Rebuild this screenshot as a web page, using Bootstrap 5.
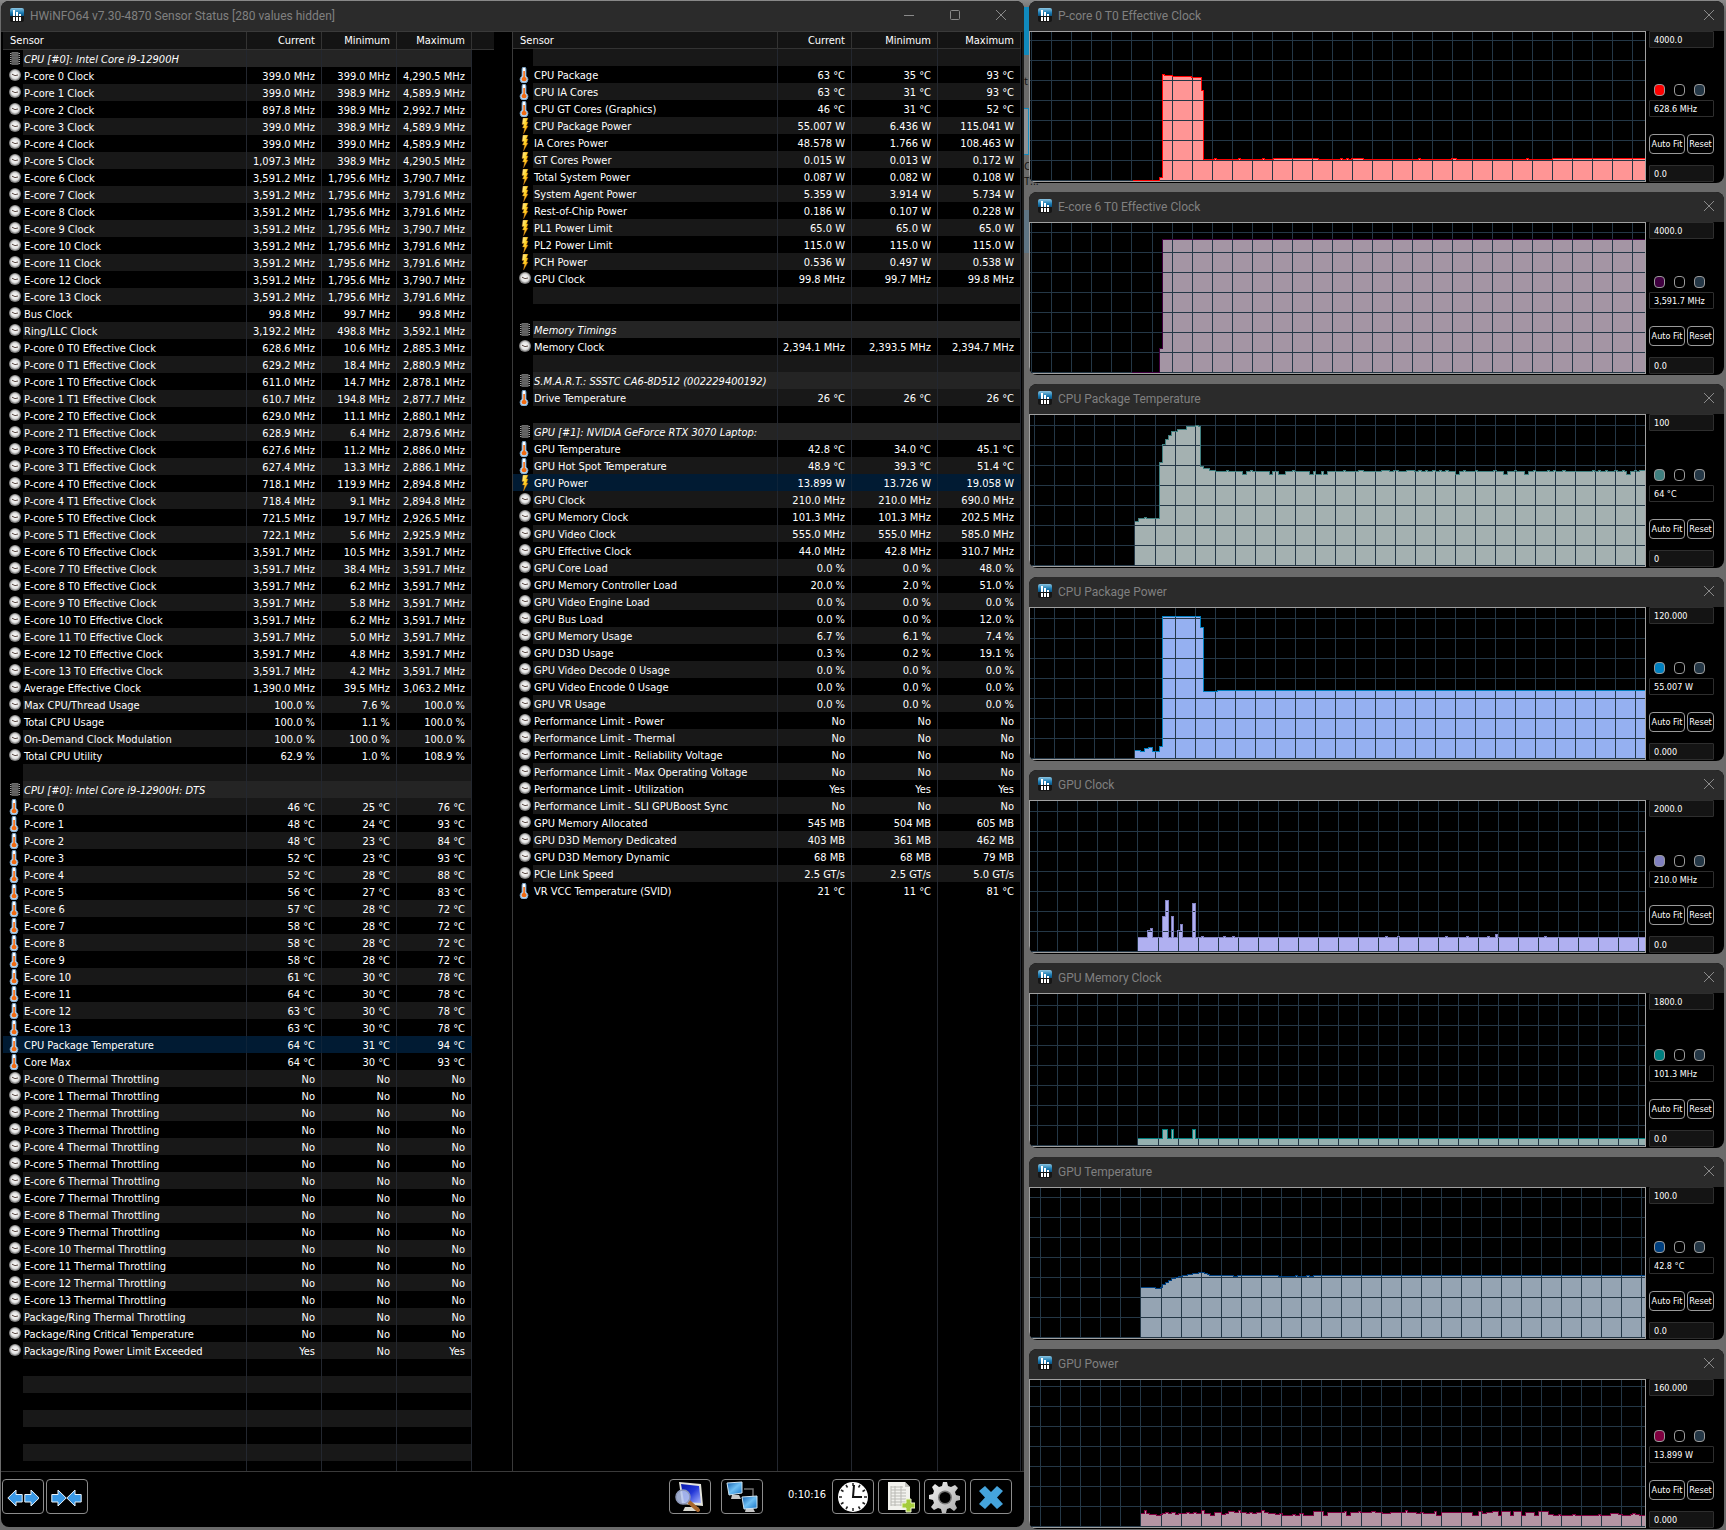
<!DOCTYPE html>
<html lang="en">
<head>
<meta charset="utf-8">
<meta name="viewport" content="width=device-width, initial-scale=1">
<title>HWiNFO64 Sensor Status</title>
<link rel="stylesheet" href="https://cdn.jsdelivr.net/npm/bootstrap@5.3.0/dist/css/bootstrap.min.css">
<style>
:root{--ui:"DejaVu Sans Condensed","DejaVu Sans",sans-serif;--line:#333;--grid:#243746}
body{background:linear-gradient(#8a8a8a 0,#6b6b6b 12px);font-family:var(--ui);font-size:11px;line-height:14px;color:#fff;min-height:100vh}
.desk{padding:1px 2px 1px 1px;gap:5px}
.main-win{flex:1023 1 0;min-width:0}
.side{flex:695 1 0;min-width:0;gap:9px}
.win{background:#000;border-radius:8px;overflow:hidden;position:relative;z-index:1}
.titlebar{height:30px;background:#2b2b2b;color:#808080;font:12px/26px Roboto,"Noto Sans",sans-serif;padding:0 9px 2px 9px;gap:6px}
.titlebar h1,.titlebar h2{font:inherit;margin:0;padding-top:2px}
.main-win .titlebar{padding-right:17px}
.app-ico{width:14px;height:14px;flex:none}
.capbtn{background:none;border:0;padding:0;width:12px;height:26px;color:#8a8a8a;display:flex;align-items:center;justify-content:center}
.caps{gap:34px}
.lists{display:grid;grid-template-columns:511fr 512fr}
.pane{min-width:0;border-top:1px solid #3a3a3a}
.pane-a{padding:0 18px 0 2px}
.pane-b{border-left:1px solid #3a3a3a;padding-right:1px;border-right:2px solid #1c1c1c}
.sens{table-layout:fixed;width:100%;height:100%;border-collapse:separate;border-spacing:0}
.sens th{background:#141414;font-weight:400;height:18px;border-bottom:1px solid var(--line);border-right:1px solid var(--line);padding:0 6px 0 0;text-align:right;line-height:15px}
.pane-b th{height:17px}
.sens th:first-child{text-align:left;padding-left:7px}
.pane-a th:last-child{border-right:0}
.sens td{height:17px;padding:3px 6px 0 0;border-right:1px solid #23272f;text-align:right;white-space:nowrap;overflow:hidden}
.sens td.ico{border-right:0;padding:0 0 0 4px;text-align:left}
.sens td.nm{text-align:left;padding:3px 0 0 1px}
.sens td.rest{border-right:0}
.sens tr.alt td:not(.ico):not(.rest){background:#181818}
.sens tr.grp td:not(.ico):not(.rest){background:#242424}
.sens tr.grp .nm{font-style:italic}
.sens tr.pick td:not(.rest){background:#011b33;border-right-color:#0d2339}
.sens tr.fill td{height:10px;padding:0}
.pane-b tr.fill{height:100%}
.sens svg{display:block;width:16px;height:16px}
.c-ico{width:20px}.c75{width:75px}.c74{width:74px}.c86{width:86px}.c83{width:83px}.c22{width:22px}
.tools{height:56px;border-top:1px solid #3a3a3a;padding:7px 12px 0 1px;gap:4px}
.pair{gap:2px}
.tool{width:42px;height:35px;padding:0;background:#000;border:1px solid #8c8c8c;border-radius:4px;display:flex;align-items:center;justify-content:center}
.tool svg{width:32px;height:32px}
.gap-l{margin-right:6px}
.clock-txt{margin:0 2px 0 21px;line-height:32px;width:38px}
.plot{flex:1 1 0;min-width:0;border:1px solid #a0a0a0;margin-bottom:1px}
.plot svg{display:block;width:100%}
.ctl{width:78px;padding:0 10px 1px 3px;font-size:9px}
.ctl input{width:65px;height:17px;padding:0 0 0 4px;color:#fff;background:#141414;border:1px solid #2e2e2e;border-radius:1px;font-size:9px;line-height:15px;display:block}
.ctl input.now{background:#000}
.sw{width:11px;height:12px;padding:0;border:1px solid #9a9a9a;border-radius:4px}
.sws{gap:9px;padding-left:5px;margin-bottom:4px}
.bts{gap:2px;margin:17px 0 11px 0}
.bt{height:20px;padding:0;color:#fff;background:#000;border:1px solid #9a9a9a;border-radius:4px;font-size:9px;line-height:16px;white-space:nowrap;overflow:hidden}
.bt-a{width:36px}.bt-r{width:27px}
.behind{position:absolute;left:1024px;top:0;width:20px;color:#101010;font:11px/14px "Open Sans",sans-serif}
.behind i{position:absolute;left:0;width:5px}
.b1{top:7px;height:48px;background:#1089bd}
.b2{top:108px;height:47px;border:1px solid #1089bd;border-left:0;background:#8d9296}
.b3{top:210px;height:43px;background:#5e7484}
.behind span{position:absolute;left:0}
.s1{top:74px}.s2{top:159px}.s3{top:174px}
</style>
</head>
<body>
<svg class="position-absolute" width="0" height="0" aria-hidden="true">
<defs>
<linearGradient id="gApp" x1="0" y1="0" x2="0" y2="1"><stop offset="0" stop-color="#8cc4e0"/><stop offset=".6" stop-color="#1a7cb4"/><stop offset="1" stop-color="#0a4f7d"/></linearGradient>
<linearGradient id="gBolt" x1="0" y1="0" x2="1" y2="1"><stop offset="0" stop-color="#fff6b0"/><stop offset=".5" stop-color="#ffd21f"/><stop offset="1" stop-color="#f07a10"/></linearGradient>
<linearGradient id="gScr" x1="0" y1="0" x2="1" y2="1"><stop offset="0" stop-color="#0718a8"/><stop offset=".5" stop-color="#2438d8"/><stop offset="1" stop-color="#a9b6ff"/></linearGradient>
<linearGradient id="gNet" x1="0" y1="0" x2="1" y2="1"><stop offset="0" stop-color="#0d5aa8"/><stop offset=".5" stop-color="#6fc0f5"/><stop offset="1" stop-color="#1673c6"/></linearGradient>
<linearGradient id="gGear" x1="0" y1="0" x2="1" y2="1"><stop offset="0" stop-color="#f4f4f4"/><stop offset="1" stop-color="#a8a8a8"/></linearGradient>
<radialGradient id="gDial"><stop offset="0" stop-color="#fff"/><stop offset=".7" stop-color="#e2e2e2"/><stop offset="1" stop-color="#9c9c9c"/></radialGradient>
<symbol id="app" viewBox="0 0 14 14"><rect width="14" height="14" rx="2" fill="#151515"/><path d="M0 8V2Q0 0 2 0H12Q14 0 14 2V8Z" fill="url(#gApp)"/><path d="M3 2h2v6H3zM6 4h2v4H6zM9 6h2v2H9z" fill="#fff"/><path d="M3 9h2v4H3zM6 9h2v4H6zM9 9h2v4H9z" fill="#fff"/></symbol>
<symbol id="k" viewBox="0 0 16 16"><circle cx="8" cy="7" r="6" fill="#7d7d7d"/><circle cx="8" cy="6.8" r="5.2" fill="url(#gDial)"/><path d="M5 6.2 8 7.6 11 7" fill="none" stroke="#5b4a44" stroke-width="1"/></symbol>
<symbol id="g" viewBox="0 0 16 16"><rect x="4.500" y="1" width="7" height="13" fill="#5c5c5c"/><path d="M5 1.500h6M5 4h6M5 7h6M5 10h6" stroke="#6c6c6c"/><path d="M3 2.500h1.500M3 4.500h1.500M3 6.500h1.500M3 8.500h1.500M3 10.500h1.500M3 12.500h1.500M11.500 2.500H13M11.500 4.500H13M11.500 6.500H13M11.500 8.500H13M11.500 10.500H13M11.500 12.500H13" stroke="#a0a0a0"/></symbol>
<symbol id="t" viewBox="0 0 16 16"><path d="M5 2q0-2 2-2t2 2v7.200q2 1 2 3.200 0 3.600-4 3.600t-4-3.600q0-2.200 2-3.200z" fill="#b9d6ee" stroke="#6f9cc4" stroke-width=".8"/><path d="M6 1h2v8H6z" fill="#fff"/><path d="M6.300 4h1.600v6q1.700.6 1.700 2.200 0 2-2.500 2t-2.500-2q0-1.600 1.700-2.200z" fill="#f26a10"/></symbol>
<symbol id="b" viewBox="0 0 16 16"><path d="M6 0h5L9.500 4H11L9.500 8H11L6.500 16 7.500 10H5.500L7 6.500H5Z" fill="url(#gBolt)" stroke="#b06010" stroke-width=".4"/></symbol>
<symbol id="arw" viewBox="0 0 16 18"><path d="M.8 9 9 1v4.500h6.200v7.500H9V17z" fill="#3a99e6" stroke="#e9f3fb" stroke-width="1"/></symbol>
</defs></svg>

<div class="behind" aria-hidden="true"><i class="b1"></i><i class="b2"></i><i class="b3"></i><span class="s1">t</span><span class="s2">C</span><span class="s3">T...</span></div>

<div class="desk d-flex align-items-start">
<main class="main-win win">
  <header class="titlebar d-flex align-items-center">
    <svg class="app-ico"><use href="#app"/></svg>
    <h1 class="flex-grow-1 text-nowrap">HWiNFO64 v7.30-4870 Sensor Status [280 values hidden]</h1>
    <div class="caps d-flex">
      <button class="capbtn" aria-label="Minimize"><svg width="12" height="12"><path d="M1 6.500h10" stroke="currentColor"/></svg></button>
      <button class="capbtn" aria-label="Maximize"><svg width="12" height="12"><rect x="1.500" y="1.500" width="9" height="9" rx="1" fill="none" stroke="currentColor"/></svg></button>
      <button class="capbtn" aria-label="Close"><svg width="12" height="12"><path d="M1 1l10 10M11 1 1 11" stroke="currentColor"/></svg></button>
    </div>
  </header>
  <div class="lists">
    <section class="pane pane-a"><table class="sens">
      <colgroup><col class="c-ico"><col><col class="c75"><col class="c75"><col class="c75"><col class="c22"></colgroup>
      <thead><tr><th colspan="2">Sensor</th><th>Current</th><th>Minimum</th><th>Maximum</th><th></th></tr></thead>
      <tbody id="listA"></tbody></table></section>
    <section class="pane pane-b"><table class="sens">
      <colgroup><col class="c-ico"><col><col class="c74"><col class="c86"><col class="c83"></colgroup>
      <thead><tr><th colspan="2">Sensor</th><th>Current</th><th>Minimum</th><th>Maximum</th></tr></thead>
      <tbody id="listB"></tbody></table></section>
  </div>
  <footer class="tools d-flex">
    <div class="pair d-flex me-auto">
    <button class="tool" aria-label="Widen columns"><svg viewBox="0 0 32 32"><use href="#arw" x="0" y="8" width="16" height="18"/><use href="#arw" x="0" y="8" width="16" height="18" transform="matrix(-1 0 0 1 33 0)"/></svg></button>
    <button class="tool" aria-label="Narrow columns"><svg viewBox="0 0 32 32"><use href="#arw" x="0" y="8" width="16" height="18" transform="matrix(-1 0 0 1 16 0)"/><use href="#arw" x="15" y="8" width="16" height="18"/></svg></button>
    </div>
    <button class="tool gap-l" aria-label="System summary"><svg viewBox="0 0 32 32"><path d="M11 26h13l2 4H9z" fill="#d8d8d0"/><path d="M5 1 27 3 29 25 8 23z" fill="#e4e4dc"/><path d="M7 3 25 5 27 22 10 21z" fill="url(#gScr)"/><path d="m15 21 9 8" stroke="#a8662c" stroke-width="4" stroke-linecap="round"/><circle cx="9" cy="16" r="7" fill="#b9c8f0" fill-opacity=".85" stroke="#8d98b8" stroke-width="1.500"/></svg></button>
    <button class="tool" aria-label="Remote monitoring"><svg viewBox="0 0 32 32"><path d="M18 8h9v8" fill="none" stroke="#707070" stroke-width="1.500"/><path d="M6 14h7l2 4H5zM20 27h7l2 4H19z" fill="#c8c8c8"/><path d="M1 2 16 1v11L3 14z" fill="url(#gNet)" stroke="#cfe4f2"/><path d="M16 16 31 15v12l-13 1z" fill="url(#gNet)" stroke="#cfe4f2"/></svg></button>
    <span class="clock-txt">0:10:16</span>
    <button class="tool" aria-label="Reset clock"><svg viewBox="0 0 32 32"><circle cx="16" cy="16" r="15" fill="#fff"/><path d="M16 2v3M16 27v3M2 16h3M27 16h3M9 4l1.500 2.500M23 4l-1.500 2.500M9 28l1.500-2.500M23 28l-1.500-2.500M4 9l2.500 1.500M28 9l-2.500 1.500M4 23l2.500-1.500M28 23l-2.500-1.500" stroke="#222" stroke-width="1.500"/><path d="M17 4 16 16h9" fill="none" stroke="#111" stroke-width="2"/></svg></button>
    <button class="tool" aria-label="Log to file"><svg viewBox="0 0 32 32"><path d="M5 1h17l5 5v23H5z" fill="#f2f2ee"/><path d="M22 1v5h5z" fill="#c4c4c0"/><path d="M8 6h12M8 9h15M8 12h15M8 15h15M8 18h15M8 21h15M8 24h11M12 5v20M18 5v20M8 5v20" stroke="#b9b9b4"/><path d="M23 18h5v4h4v5h-4v4h-5v-4h-4v-5h4z" fill="#a4cc3c" stroke="#eef5d0"/></svg></button>
    <button class="tool" aria-label="Settings"><svg viewBox="0 0 32 32"><path d="M14 1h4l1 4 3 1 4-2 3 3-3 4 1 3 4 1v4l-4 1-1 3 2 4-3 3-4-3-3 1-1 4h-4l-1-4-3-1-4 2-3-3 3-4-1-3-4-1v-4l4-1 1-3-2-4 3-3 4 3 3-1z" fill="url(#gGear)"/><circle cx="16" cy="16.500" r="7" fill="#777"/><circle cx="16" cy="16.500" r="5.500" fill="#000"/></svg></button>
    <button class="tool" aria-label="Close sensors"><svg viewBox="0 0 32 32"><path d="m10 5 6 6 6-6 6 5-6 6.500 6 6.500-6 5-6-6-6 6-6-5 6-6.500L4 10z" fill="#45a4dc"/></svg></button>
  </footer>
</main>
<aside class="side d-flex flex-column" id="charts"></aside>
</div>

<script>
// kind|name|current|minimum|maximum; kinds: k clock, t thermometer, b power, g group, - blank
const A = `g|CPU [#0]: Intel Core i9-12900H
k|P-core 0 Clock|399.0 MHz|399.0 MHz|4,290.5 MHz
k|P-core 1 Clock|399.0 MHz|398.9 MHz|4,589.9 MHz
k|P-core 2 Clock|897.8 MHz|398.9 MHz|2,992.7 MHz
k|P-core 3 Clock|399.0 MHz|398.9 MHz|4,589.9 MHz
k|P-core 4 Clock|399.0 MHz|399.0 MHz|4,589.9 MHz
k|P-core 5 Clock|1,097.3 MHz|398.9 MHz|4,290.5 MHz
k|E-core 6 Clock|3,591.2 MHz|1,795.6 MHz|3,790.7 MHz
k|E-core 7 Clock|3,591.2 MHz|1,795.6 MHz|3,791.6 MHz
k|E-core 8 Clock|3,591.2 MHz|1,795.6 MHz|3,791.6 MHz
k|E-core 9 Clock|3,591.2 MHz|1,795.6 MHz|3,790.7 MHz
k|E-core 10 Clock|3,591.2 MHz|1,795.6 MHz|3,791.6 MHz
k|E-core 11 Clock|3,591.2 MHz|1,795.6 MHz|3,791.6 MHz
k|E-core 12 Clock|3,591.2 MHz|1,795.6 MHz|3,790.7 MHz
k|E-core 13 Clock|3,591.2 MHz|1,795.6 MHz|3,791.6 MHz
k|Bus Clock|99.8 MHz|99.7 MHz|99.8 MHz
k|Ring/LLC Clock|3,192.2 MHz|498.8 MHz|3,592.1 MHz
k|P-core 0 T0 Effective Clock|628.6 MHz|10.6 MHz|2,885.3 MHz
k|P-core 0 T1 Effective Clock|629.2 MHz|18.4 MHz|2,880.9 MHz
k|P-core 1 T0 Effective Clock|611.0 MHz|14.7 MHz|2,878.1 MHz
k|P-core 1 T1 Effective Clock|610.7 MHz|194.8 MHz|2,877.7 MHz
k|P-core 2 T0 Effective Clock|629.0 MHz|11.1 MHz|2,880.1 MHz
k|P-core 2 T1 Effective Clock|628.9 MHz|6.4 MHz|2,879.6 MHz
k|P-core 3 T0 Effective Clock|627.6 MHz|11.2 MHz|2,886.0 MHz
k|P-core 3 T1 Effective Clock|627.4 MHz|13.3 MHz|2,886.1 MHz
k|P-core 4 T0 Effective Clock|718.1 MHz|119.9 MHz|2,894.8 MHz
k|P-core 4 T1 Effective Clock|718.4 MHz|9.1 MHz|2,894.8 MHz
k|P-core 5 T0 Effective Clock|721.5 MHz|19.7 MHz|2,926.5 MHz
k|P-core 5 T1 Effective Clock|722.1 MHz|5.6 MHz|2,925.9 MHz
k|E-core 6 T0 Effective Clock|3,591.7 MHz|10.5 MHz|3,591.7 MHz
k|E-core 7 T0 Effective Clock|3,591.7 MHz|38.4 MHz|3,591.7 MHz
k|E-core 8 T0 Effective Clock|3,591.7 MHz|6.2 MHz|3,591.7 MHz
k|E-core 9 T0 Effective Clock|3,591.7 MHz|5.8 MHz|3,591.7 MHz
k|E-core 10 T0 Effective Clock|3,591.7 MHz|6.2 MHz|3,591.7 MHz
k|E-core 11 T0 Effective Clock|3,591.7 MHz|5.0 MHz|3,591.7 MHz
k|E-core 12 T0 Effective Clock|3,591.7 MHz|4.8 MHz|3,591.7 MHz
k|E-core 13 T0 Effective Clock|3,591.7 MHz|4.2 MHz|3,591.7 MHz
k|Average Effective Clock|1,390.0 MHz|39.5 MHz|3,063.2 MHz
k|Max CPU/Thread Usage|100.0 %|7.6 %|100.0 %
k|Total CPU Usage|100.0 %|1.1 %|100.0 %
k|On-Demand Clock Modulation|100.0 %|100.0 %|100.0 %
k|Total CPU Utility|62.9 %|1.0 %|108.9 %
-
g|CPU [#0]: Intel Core i9-12900H: DTS
t|P-core 0|46 °C|25 °C|76 °C
t|P-core 1|48 °C|24 °C|93 °C
t|P-core 2|48 °C|23 °C|84 °C
t|P-core 3|52 °C|23 °C|93 °C
t|P-core 4|52 °C|28 °C|88 °C
t|P-core 5|56 °C|27 °C|83 °C
t|E-core 6|57 °C|28 °C|72 °C
t|E-core 7|58 °C|28 °C|72 °C
t|E-core 8|58 °C|28 °C|72 °C
t|E-core 9|58 °C|28 °C|72 °C
t|E-core 10|61 °C|30 °C|78 °C
t|E-core 11|64 °C|30 °C|78 °C
t|E-core 12|63 °C|30 °C|78 °C
t|E-core 13|63 °C|30 °C|78 °C
t*|CPU Package Temperature|64 °C|31 °C|94 °C
t|Core Max|64 °C|30 °C|93 °C
k|P-core 0 Thermal Throttling|No|No|No
k|P-core 1 Thermal Throttling|No|No|No
k|P-core 2 Thermal Throttling|No|No|No
k|P-core 3 Thermal Throttling|No|No|No
k|P-core 4 Thermal Throttling|No|No|No
k|P-core 5 Thermal Throttling|No|No|No
k|E-core 6 Thermal Throttling|No|No|No
k|E-core 7 Thermal Throttling|No|No|No
k|E-core 8 Thermal Throttling|No|No|No
k|E-core 9 Thermal Throttling|No|No|No
k|E-core 10 Thermal Throttling|No|No|No
k|E-core 11 Thermal Throttling|No|No|No
k|E-core 12 Thermal Throttling|No|No|No
k|E-core 13 Thermal Throttling|No|No|No
k|Package/Ring Thermal Throttling|No|No|No
k|Package/Ring Critical Temperature|No|No|No
k|Package/Ring Power Limit Exceeded|Yes|No|Yes
-
-
-
-
-
-`;
const B = `-
t|CPU Package|63 °C|35 °C|93 °C
t|CPU IA Cores|63 °C|31 °C|93 °C
t|CPU GT Cores (Graphics)|46 °C|31 °C|52 °C
b|CPU Package Power|55.007 W|6.436 W|115.041 W
b|IA Cores Power|48.578 W|1.766 W|108.463 W
b|GT Cores Power|0.015 W|0.013 W|0.172 W
b|Total System Power|0.087 W|0.082 W|0.108 W
b|System Agent Power|5.359 W|3.914 W|5.734 W
b|Rest-of-Chip Power|0.186 W|0.107 W|0.228 W
b|PL1 Power Limit|65.0 W|65.0 W|65.0 W
b|PL2 Power Limit|115.0 W|115.0 W|115.0 W
b|PCH Power|0.536 W|0.497 W|0.538 W
k|GPU Clock|99.8 MHz|99.7 MHz|99.8 MHz
-
-
g|Memory Timings
k|Memory Clock|2,394.1 MHz|2,393.5 MHz|2,394.7 MHz
-
g|S.M.A.R.T.: SSSTC CA6-8D512 (002229400192)
t|Drive Temperature|26 °C|26 °C|26 °C
-
g|GPU [#1]: NVIDIA GeForce RTX 3070 Laptop:
t|GPU Temperature|42.8 °C|34.0 °C|45.1 °C
t|GPU Hot Spot Temperature|48.9 °C|39.3 °C|51.4 °C
b*|GPU Power|13.899 W|13.726 W|19.058 W
k|GPU Clock|210.0 MHz|210.0 MHz|690.0 MHz
k|GPU Memory Clock|101.3 MHz|101.3 MHz|202.5 MHz
k|GPU Video Clock|555.0 MHz|555.0 MHz|585.0 MHz
k|GPU Effective Clock|44.0 MHz|42.8 MHz|310.7 MHz
k|GPU Core Load|0.0 %|0.0 %|48.0 %
k|GPU Memory Controller Load|20.0 %|2.0 %|51.0 %
k|GPU Video Engine Load|0.0 %|0.0 %|0.0 %
k|GPU Bus Load|0.0 %|0.0 %|12.0 %
k|GPU Memory Usage|6.7 %|6.1 %|7.4 %
k|GPU D3D Usage|0.3 %|0.2 %|19.1 %
k|GPU Video Decode 0 Usage|0.0 %|0.0 %|0.0 %
k|GPU Video Encode 0 Usage|0.0 %|0.0 %|0.0 %
k|GPU VR Usage|0.0 %|0.0 %|0.0 %
k|Performance Limit - Power|No|No|No
k|Performance Limit - Thermal|No|No|No
k|Performance Limit - Reliability Voltage|No|No|No
k|Performance Limit - Max Operating Voltage|No|No|No
k|Performance Limit - Utilization|Yes|Yes|Yes
k|Performance Limit - SLI GPUBoost Sync|No|No|No
k|GPU Memory Allocated|545 MB|504 MB|605 MB
k|GPU D3D Memory Dedicated|403 MB|361 MB|462 MB
k|GPU D3D Memory Dynamic|68 MB|68 MB|79 MB
k|PCIe Link Speed|2.5 GT/s|2.5 GT/s|5.0 GT/s
t|VR VCC Temperature (SVID)|21 °C|11 °C|81 °C`;
function fill(id, text, rest) {
  const tail = rest ? '<td class="rest"></td>' : '';
  document.getElementById(id).innerHTML = text.split('\n').map((l, i) => {
    const [k, n = '', c = '', m = '', x = ''] = l.split('|');
    const cls = k === 'g' ? 'grp' : k.endsWith('*') ? 'pick' : i % 2 ? '' : 'alt';
    const ico = k === '-' ? '' : `<svg><use href="#${k[0]}"/></svg>`;
    return `<tr class="${cls}"><td class="ico">${ico}</td><td class="nm">${n}</td><td>${c}</td><td>${m}</td><td>${x}</td>${tail}</tr>`;
  }).join('') + `<tr class="fill"><td class="ico"></td><td></td><td></td><td></td><td></td>${tail}</tr>`;
}
fill('listA', A, true);
fill('listB', B, false);

// Lays short blips (x, width, level) over a flat stretch of a stepped trace.
function blips(base, list) { return list.flatMap(([x, w, y]) => [[x, y], [x + w, base]]); }
const s3 = [[196,2,55],[212,4,59],[220,2,55],[239,3,59],[248,7,59],[262,2,55],[279,4,59],[285,6,59],[293,4,59],[313,2,55],[328,5,55],[351,8,55],[363,5,55],[376,8,55],[388,3,55],[395,2,55],[402,3,55],[409,2,55],[415,3,55],[425,4,59],[433,2,55],[445,2,55],[463,3,55],[473,4,59],[484,2,55],[494,4,59],[503,2,55],[517,2,55],[523,2,55],[532,3,55],[562,2,55],[568,2,55],[575,2,55],[584,3,55],[592,2,55],[596,4,59],[604,2,55],[609,6,55]];
const charts = [
 {t:'P-core 0 T0 Effective Clock',hi:'4000.0',lo:'0.0',v:'628.6 MHz',h:149,g:1,f:'#ff9595',s:'#ff0000',
  d:[[102,148],[129,145],[132,42],[134,43],[142,44],[161,45],[171,58],[173,127],...blips(127,[[184,2,126],[208,2,126],[232,2,126],[243,45,126],[310,2,126],[316,2,126],[321,12,126],[388,2,126],[421,5,126],[496,2,126],[522,93,126]])]},
 {t:'E-core 6 T0 Effective Clock',hi:'4000.0',lo:'0.0',v:'3,591.7 MHz',h:150,g:1,f:'#a495a4',s:'#400040',d:[[101,149],[129,125],[132,16]]},
 {t:'CPU Package Temperature',hi:'100',lo:'0',v:'64 °C',h:151,g:4,f:'#a4b1b1',s:'#408080',
  d:[[104,106],[108,103],[114,102],[116,103],[129,47],[132,29],[135,24],[138,20],[141,16],[147,14],[156,11],[165,10],[168,11],[170,51],[173,53],[179,55],[185,56],...blips(56,s3)]},
 {t:'CPU Package Power',hi:'120.000',lo:'0.000',v:'55.007 W',h:151,g:4,f:'#95b0f1',s:'#0080c0',
  d:[[104,142],[110,143],[114,140],[118,139],[122,143],[129,138],[132,8],[170,19],[173,83],[187,82]]},
 {t:'GPU Clock',hi:'2000.0',lo:'0.0',v:'210.0 MHz',h:151,g:7,f:'#b0b0f1',s:'#8080c0',
  d:[[107,136],[117,129],[120,127],[122,136],[132,115],[135,99],[138,136],[141,115],[143,136],[147,129],[150,123],[152,136],[162,102],[165,136],...blips(136,[[171,2,135],[193,2,135],[202,2,135],[355,2,135],[367,2,135],[415,2,135],[436,2,135],[457,2,135],[465,2,133],[514,2,135]])]},
 {t:'GPU Memory Clock',hi:'1800.0',lo:'0.0',v:'101.3 MHz',h:152,g:7,f:'#95b0b0',s:'#008080',
  d:[[107,144],[132,135],[137,144],[141,135],[143,144],[162,135],[165,144]]},
 {t:'GPU Temperature',hi:'100.0',lo:'0.0',v:'42.8 °C',h:150,g:10,f:'#95a4b3',s:'#004080',
  d:[[110,99],[125,100],[130,99],[132,96],[135,94],[138,92],[141,90],[145,89],[148,88],[152,87],[157,86],[162,85],[168,84],[174,85],[177,86],[179,87],[203,88],[207,87],[248,88],[265,87],[267,88],[276,87],[279,88],[283,87]]},
 {t:'GPU Power',hi:'160.000',lo:'0.000',v:'13.899 W',h:147,g:10,f:'#b495a4',s:'#800040',
  d:[[110,133],[114,130],[116,133],[119,134],[126,135],[130,134],[132,133],[135,132],[138,133],[141,132],[145,134],[148,133],[156,132],[159,133],[163,132],[166,133],[171,130],[174,133],[180,135],[184,132],[191,134],[195,133],[198,131],[204,132],[208,130],[210,132],[216,133],[219,132],[222,133],[226,132],[231,130],[234,132],[238,133],[245,134],[249,133],[252,135],[262,134],[265,135],[269,133],[273,135],[283,131],[293,135],[297,132],[314,131],[316,135],[320,132],[328,131],[330,132],[341,131],[345,132],[352,133],[360,132],[375,130],[377,132],[386,133],[390,132],[393,133],[404,131],[406,135],[411,132],[420,132],[440,132],[442,135],[448,131],[452,133],[456,132],[462,131],[468,135],[471,131],[480,135],[483,131],[491,135],[495,132],[504,135],[508,131],[518,134],[523,135],[528,134],[530,135],[542,134],[545,135],[568,134],[570,135],[580,133],[588,134],[592,135],[600,134],[602,133],[605,134],[609,135]]}
];
document.getElementById('charts').innerHTML = charts.map((c, n) => {
  const b = c.h - 1, W = 2600;
  let p = `M${c.d[0][0]}.5 ${c.d[0][1]}.5`;
  c.d.slice(1).forEach(([x, y]) => p += `H${x}.5V${y}.5`);
  p += `H${W}`;
  const area = `M${c.d[0][0]} ${b}V${p.slice(1).split(' ')[1]}` + `H${W}V${b}Z`;
  let grid = '';
  for (let y = b; y > 0; y -= 20) grid += `M0 ${y}.5H${W}`;
  for (let x = c.g, i = 0; x < W; x += (++i === 6 ? 21 : 20)) grid += `M${x}.5 0V${c.h}`;
  return `<section class="win"><header class="titlebar d-flex align-items-center"><svg class="app-ico"><use href="#app"/></svg><h2 class="flex-grow-1 text-nowrap">${c.t}</h2>
  <button class="capbtn" aria-label="Close"><svg width="12" height="12"><path d="M1 1l10 10M11 1 1 11" stroke="currentColor"/></svg></button></header>
  <div class="d-flex"><div class="plot"><svg height="${c.h}" role="img" aria-label="${c.t}" shape-rendering="crispEdges"><path d="${area}" fill="${c.f}"/><path d="${grid}" stroke="#243746" fill="none"/><path d="${p}" stroke="${c.s}" fill="none"/></svg></div>
  <div class="ctl d-flex flex-column"><input type="text" aria-label="Scale maximum" id="hi${n}" value="${c.hi}">
  <div class="sws d-flex mt-auto"><button class="sw" aria-label="Line colour" style="background:${c.s}"></button><button class="sw" aria-label="Background colour" style="background:#000"></button><button class="sw" aria-label="Grid colour" style="background:#243746"></button></div>
  <input class="now" type="text" readonly aria-label="Current value" value="${c.v}">
  <div class="bts d-flex"><button class="bt bt-a">Auto Fit</button><button class="bt bt-r">Reset</button></div>
  <input type="text" aria-label="Scale minimum" value="${c.lo}"></div></div></section>`;
}).join('');
</script>
<script src="https://cdn.jsdelivr.net/npm/bootstrap@5.3.0/dist/js/bootstrap.bundle.min.js"></script>
</body>
</html>
